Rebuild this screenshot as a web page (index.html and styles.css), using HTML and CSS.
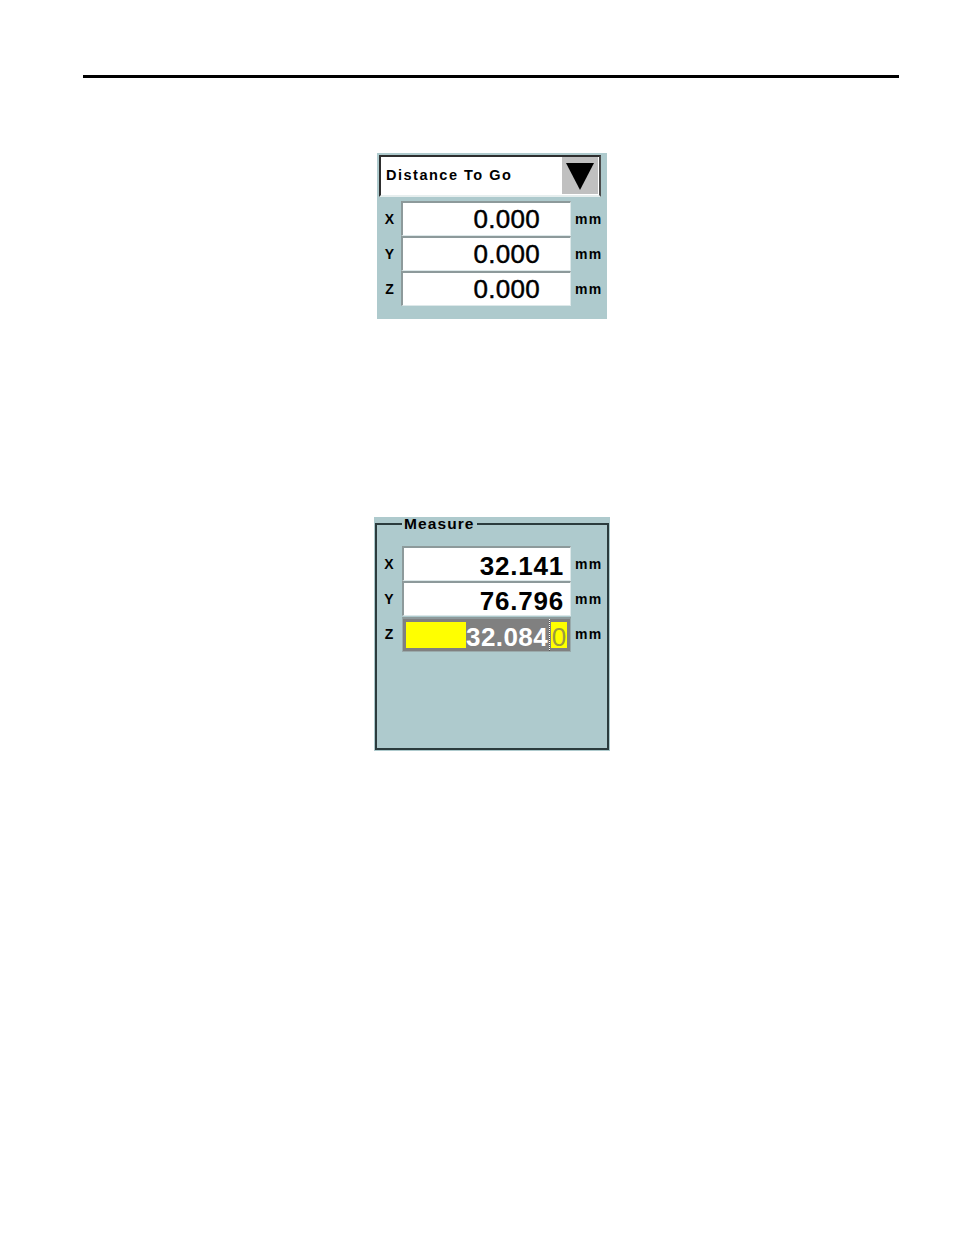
FILE: index.html
```html
<!DOCTYPE html>
<html>
<head>
<meta charset="utf-8">
<link rel="stylesheet" href="styles.css">
</head>
<body>
<div class="rule"></div>

<div class="panel dtg">
  <div class="dropdown">
    <span class="dd-text">Distance To Go</span>
    <span class="dd-btn"><svg width="28" height="27" viewBox="0 0 28 27"><polygon points="0,0 28,0 14,27" fill="#000"/></svg></span>
  </div>
  <div class="rows">
    <div class="row"><span class="lbl">X</span><span class="field">0.000</span><span class="unit">mm</span></div>
    <div class="row"><span class="lbl">Y</span><span class="field">0.000</span><span class="unit">mm</span></div>
    <div class="row"><span class="lbl">Z</span><span class="field">0.000</span><span class="unit">mm</span></div>
  </div>
</div>

<div class="panel measure">
  <fieldset class="group">
    <legend class="legend">Measure</legend>
    <div class="rows2">
      <div class="row"><span class="lbl">X</span><span class="field bold">32.141</span><span class="unit">mm</span></div>
      <div class="row"><span class="lbl">Y</span><span class="field bold">76.796</span><span class="unit">mm</span></div>
      <div class="row"><span class="lbl">Z</span><span class="field editing"><span class="fill"></span><span class="sel">32.084</span><span class="caret"></span><span class="last">0</span></span><span class="unit">mm</span></div>
    </div>
  </fieldset>
</div>
</body>
</html>
```

FILE: styles.css
```css
body {
  margin: 0;
  background: #fff;
  font-family: "Liberation Sans", Arial, sans-serif;
  color: #000;
}
.rule {
  margin: 75px 0 0 83px;
  width: 816px;
  height: 3px;
  background: #000;
}
.panel {
  background: #aecacd;
  box-sizing: border-box;
}
.dtg {
  margin: 75px 0 0 377px;
  width: 230px;
  height: 166px;
  padding: 2px 0 0 2px;
}
.dropdown {
  box-sizing: border-box;
  width: 222px;
  height: 42px;
  background: #fff;
  border-top: 2px solid #2e2e2e;
  border-left: 2px solid #2e2e2e;
  border-right: 2px solid #4a4a4a;
  border-bottom: 2px solid #e6eeee;
  display: flex;
  align-items: center;
  justify-content: space-between;
}
.dd-text {
  padding-left: 5px;
  font-size: 14.5px;
  font-weight: bold;
  letter-spacing: 1.5px;
  margin-top: -3px;
}
.dd-btn {
  align-self: stretch;
  width: 36px;
  margin: 0 1px 1px 0;
  background: #c0c0c0;
  display: flex;
  align-items: center;
  justify-content: center;
}
.dd-btn svg { display: block; margin-top: 1px; }
.rows {
  margin-top: 4px;
}
.row {
  display: flex;
  align-items: center;
  height: 35px;
}
.lbl {
  width: 22px;
  text-align: center;
  font-size: 14px;
  font-weight: bold;
  letter-spacing: 1px;
}
.field {
  box-sizing: border-box;
  width: 170px;
  height: 35px;
  background: #fff;
  border-top: 2px solid #8d9a9b;
  border-left: 2px solid #8d9a9b;
  border-right: 1px solid #dde8e9;
  border-bottom: 1px solid #dde8e9;
  font-size: 26px;
  line-height: 32px;
  text-align: right;
  padding-right: 30px;
  letter-spacing: 0.3px;
  -webkit-text-stroke: 0.45px #000;
}
.unit {
  margin-left: 4px;
  font-size: 14px;
  font-weight: bold;
  letter-spacing: 1.4px;
}
.measure {
  margin: 198px 0 0 374px;
  width: 236px;
  height: 234px;
  padding: 0 1px 1px 1px;
}
.group {
  margin: 0;
  padding: 0;
  height: 100%;
  box-sizing: border-box;
  border: 2px solid #2b3b3d;
}
.legend {
  margin-left: 25px;
  padding: 0 2px;
  font-size: 15.5px;
  line-height: 14px;
  font-weight: bold;
  letter-spacing: 1.1px;
}
.rows2 {
  margin-top: 15px;
}
.rows2 .row { height: 35.3px; }
.rows2 .lbl { width: 25px; }
.rows2 .field {
  width: 169px;
  padding-right: 6px;
  line-height: 36px;
  letter-spacing: 0.8px;
  -webkit-text-stroke: 0;
}
.bold { font-weight: bold; }
.field.editing {
  display: flex;
  padding: 3px;
  background: #808080;
  border: 1px solid #9aaaab;
  border-top: 2px solid #8d9a9b;
}
.fill {
  flex: 1;
  background: #ffff00;
}
.sel {
  background: #808080;
  color: #fff;
  font-weight: bold;
  line-height: 31px;
  letter-spacing: 0.4px;
}
.caret {
  width: 1px;
  background: repeating-linear-gradient(#fff 0 1px, #555 1px 2px);
  margin: -3px 1px;
}
.last {
  width: 16px;
  background: #ffff00;
  color: #9a9a40;
  text-align: center;
  line-height: 31px;
  letter-spacing: 0;
}
```
